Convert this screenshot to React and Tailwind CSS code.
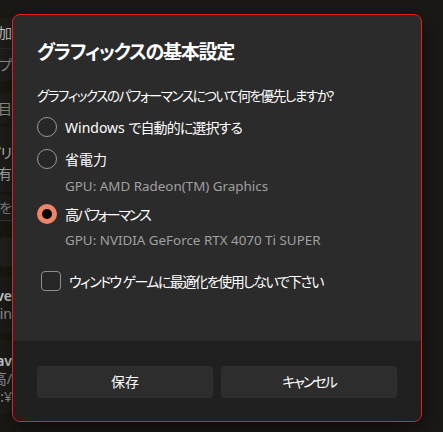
import React from "react";

const font = "font-['Noto_Sans','Noto_Sans_CJK_JP',sans-serif]";

function BgRow({ h, bg, children, extra = "" }) {
  return (
    <div className={`flex flex-col justify-center items-end overflow-hidden ${extra}`} style={{ height: h, background: bg }}>
      {children}
    </div>
  );
}

function Radio({ checked }) {
  if (checked) {
    return (
      <div className="w-5 h-5 rounded-full bg-[#ee8468] flex items-center justify-center shrink-0">
        <div className="w-[10px] h-[10px] rounded-full bg-black" />
      </div>
    );
  }
  return <div className="w-5 h-5 rounded-full border border-[#9a9a9a] bg-[#272727] shrink-0" />;
}

export default function App() {
  return (
    <div className={`relative w-[443px] h-[432px] bg-[#1b1915] overflow-hidden ${font} [font-feature-settings:'palt']`}>
      {/* background window strip */}
      <div className="w-[12px] flex flex-col text-[14px] leading-[18px] whitespace-nowrap text-[#c9c9c9]">
        <BgRow h={17} bg="#1b1915" />
        <BgRow h={31} bg="#201e1b"><span>設定を追加</span></BgRow>
        <BgRow h={1} bg="#2c2a27" />
        <BgRow h={32} bg="#211f1c"><span className="text-[#9a9a9a]">参照ップ</span></BgRow>
        <BgRow h={12} bg="#1b1915" />
        <BgRow h={31} bg="#201e1b"><span className="text-[#9a9a9a]">項目</span></BgRow>
        <BgRow h={2} bg="#1b1915" />
        <BgRow h={66} bg="#201e1b" extra="pt-2">
          <span>アプリ</span>
          <span className="text-[#b0b0b0] mt-[3px]">設定を有</span>
        </BgRow>
        <BgRow h={3} bg="#1b1915" />
        <BgRow h={26} bg="#201e1b" extra="border-b border-[#3a3835]"><span className="text-[#8a8a8a]">リストを</span></BgRow>
        <BgRow h={15} bg="#1b1915" />
        <BgRow h={31} bg="#1b1915">
          <div className="w-[12px] h-[30px] rounded-l-[4px] bg-[#24221f] ml-[2px]" />
        </BgRow>
        <BgRow h={10} bg="#1b1915" />
        <BgRow h={56} bg="#1f1d1a">
          <span className="font-semibold text-[#d8d8d8]">Save</span>
          <span className="text-[#9a9a9a]">Win</span>
        </BgRow>
        <BgRow h={7} bg="#1b1915" />
        <BgRow h={73} bg="#1f1d1a" extra="pt-1">
          <span className="font-semibold text-[#d8d8d8]">Sav</span>
          <span className="text-[#9a9a9a]">高/</span>
          <span className="text-[#9a9a9a]">C:¥</span>
        </BgRow>
      </div>

      {/* dialog */}
      <div className="absolute left-[12px] top-[14px] w-[410px] h-[408px] rounded-[8px] border border-[#e81d1d] bg-[#2b2b2b] overflow-hidden flex flex-col shadow-[0_8px_24px_rgba(0,0,0,0.5)]">
        <div className="flex-1 px-6 pt-[23px] text-white">
          <div className="text-[19px] leading-[28px] font-semibold tracking-[-1.25px]">グラフィックスの基本設定</div>
          <div className="mt-[20px] text-[13.5px] leading-[20px] tracking-[-1.4px]">グラフィックスのパフォーマンスについて何を優先しますか?</div>

          <div className="mt-[5px] h-[32px] flex items-center gap-2">
            <Radio />
            <span className="text-[14px]">Windows <span className="tracking-[-0.9px]">で自動的に選択する</span></span>
          </div>
          <div className="h-[32px] flex items-center gap-2">
            <Radio />
            <span className="text-[14px]">省電力</span>
          </div>
          <div className="mt-[1px] pl-[28px] text-[13.4px] leading-[20px] text-[#a0a0a0]">GPU: AMD Radeon(TM) Graphics</div>
          <div className="mt-[2px] h-[32px] flex items-center gap-2">
            <Radio checked />
            <span className="text-[14px] tracking-[-2px]">高パフォーマンス</span>
          </div>
          <div className="pl-[28px] text-[13.4px] leading-[20px] text-[#a0a0a0]">GPU: NVIDIA GeForce RTX 4070 Ti SUPER</div>

          <div className="mt-[15px] h-[32px] flex items-center gap-2 pl-1">
            <div className="w-5 h-5 rounded-[4px] border border-[#8e8e8e] bg-[#272727] shrink-0" />
            <span className="text-[14px] tracking-[-1.6px]">ウィンドウ ゲームに最適化を使用しないで下さい</span>
          </div>
        </div>

        <div className="h-[80px] bg-[#202020] border-t border-[#1d1d1d] px-6 flex items-center gap-2">
          <button className="flex-1 h-[32px] rounded-[4px] bg-[#2d2d2d] border border-[#303030] text-white text-[14px]">保存</button>
          <button className="flex-1 h-[32px] rounded-[4px] bg-[#2d2d2d] border border-[#303030] text-white text-[14px] tracking-[-2px]">キャンセル</button>
        </div>
      </div>
    </div>
  );
}
